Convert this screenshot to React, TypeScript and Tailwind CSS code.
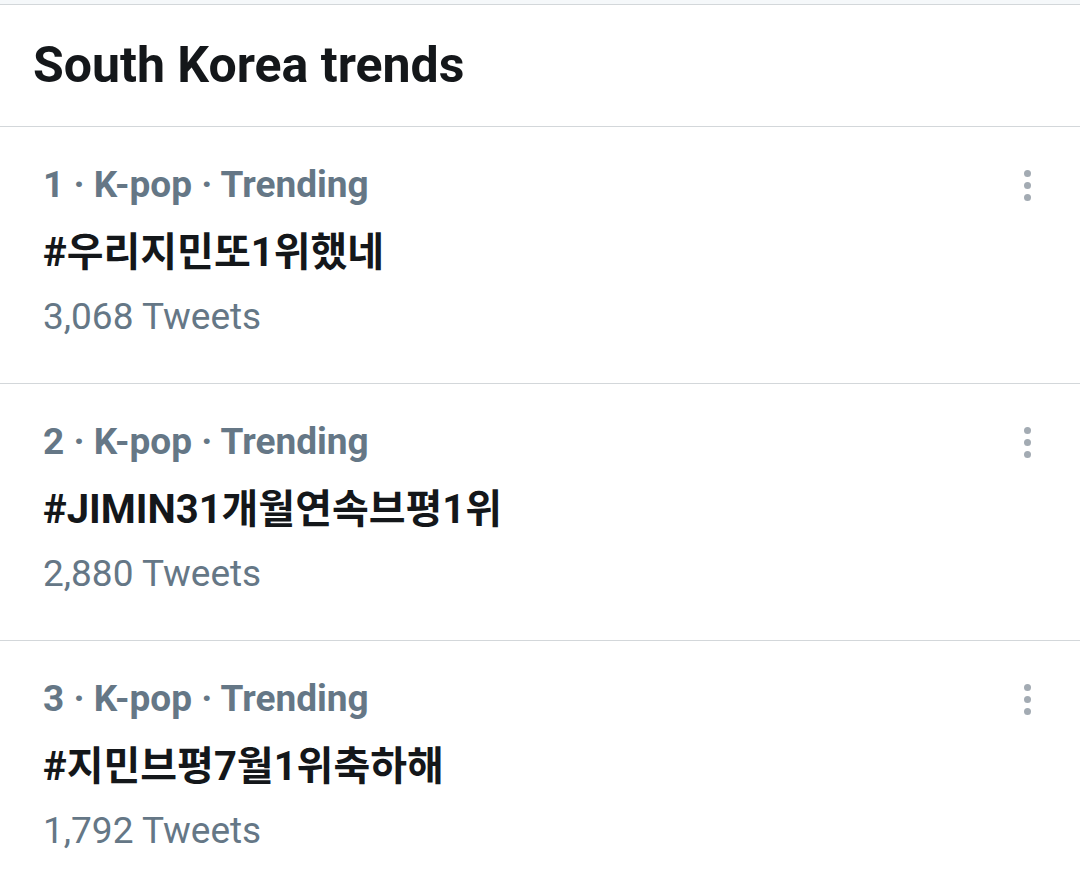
import React from "react";

const trends = [
  { rank: 1, category: "K-pop", tag: "#우리지민또1위했네", count: "3,068" },
  { rank: 2, category: "K-pop", tag: "#JIMIN31개월연속브평1위", count: "2,880" },
  { rank: 3, category: "K-pop", tag: "#지민브평7월1위축하해", count: "1,792" },
];

const font = {
  fontFamily: 'Roboto, "Noto Sans CJK KR", sans-serif',
};

// vertical "more" button on each trend row
function MoreDots() {
  return (
    <div className="flex flex-col items-center gap-[5px] pt-[7px]">
      <span className="h-[7px] w-[7px] rounded-full bg-[#a3abb3]" />
      <span className="h-[7px] w-[7px] rounded-full bg-[#a3abb3]" />
      <span className="h-[7px] w-[7px] rounded-full bg-[#a3abb3]" />
    </div>
  );
}

export default function App() {
  return (
    <div className="w-[1080px] h-[879px] overflow-hidden bg-white" style={font}>
      {/* top strip */}
      <div className="h-[5px] bg-[#f5f8fa] border-b border-[#d3d7da]" />

      {/* header */}
      <div className="px-[33px] pt-[30px] pb-[31px] border-b border-[#d3d7da]">
        <h2 className="text-[50px] leading-[60px] font-bold text-[#14171a]">
          South Korea trends
        </h2>
      </div>

      {/* trends list */}
      {trends.map((t) => (
        <div
          key={t.rank}
          className="flex justify-between pl-[43px] pr-[49px] pt-[36px] pb-[44px] border-b border-[#d3d7da]"
        >
          <div className="flex flex-col">
            <p className="text-[37px] leading-[44px] font-bold text-[#657786]">
              {t.rank} · {t.category} · Trending
            </p>
            <p className="mt-[22px] text-[40px] leading-[48px] font-bold text-[#14171a]">
              {t.tag}
            </p>
            <p className="mt-[18px] text-[37px] leading-[44px] text-[#657786]">
              {t.count} Tweets
            </p>
          </div>
          <MoreDots />
        </div>
      ))}
    </div>
  );
}
